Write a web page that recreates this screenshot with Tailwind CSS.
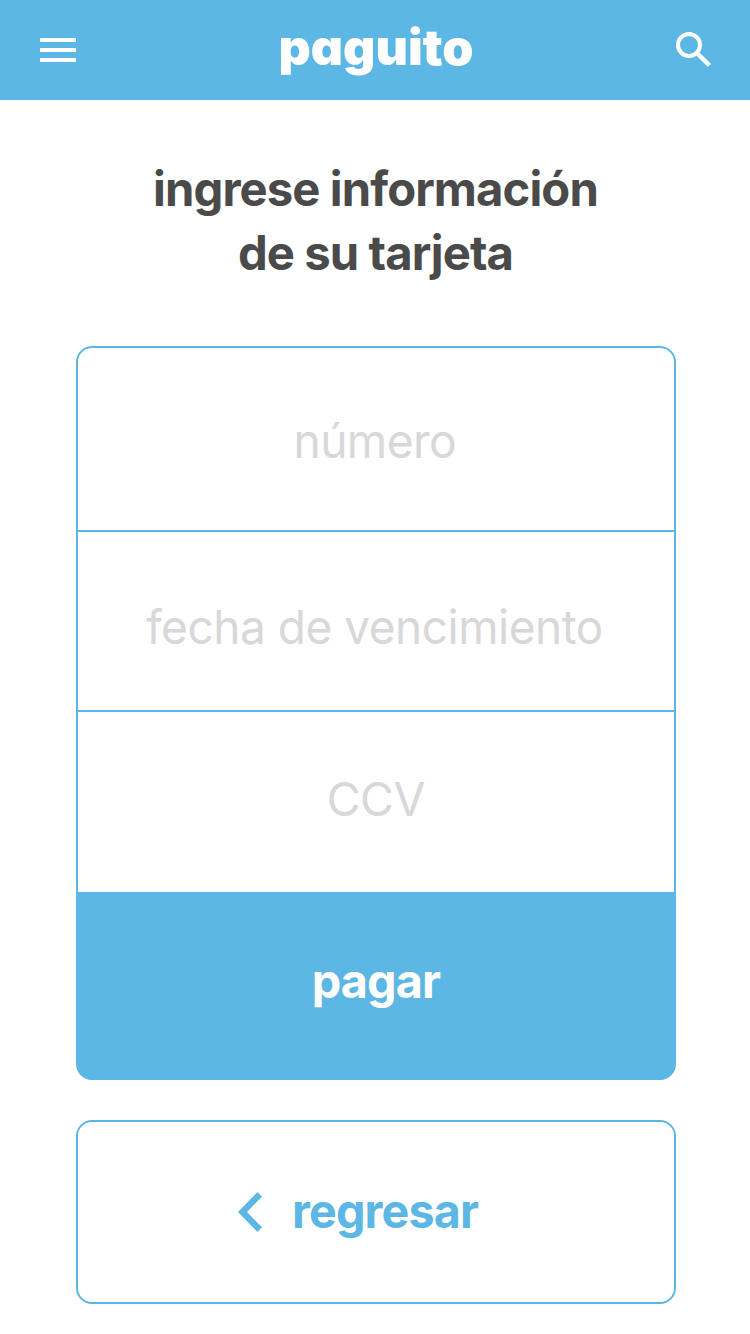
<!DOCTYPE html>
<html lang="es"><head><meta charset="utf-8"><title>paguito</title>
<script src="https://cdn.jsdelivr.net/npm/@tailwindcss/browser@4"></script></head>
<body class="bg-white font-['Inter',sans-serif] text-[48px] leading-[64px] whitespace-nowrap">
<div class="w-[750px] h-[1334px] flex flex-col items-center overflow-hidden">
<header class="w-full h-[100px] shrink-0 bg-[#5db7e4] flex items-center justify-between pl-10 pr-[38px] text-white">
<svg class="w-9 h-6" viewBox="0 0 36 24" fill="currentColor"><path d="M0 0h36v4H0zM0 10h36v4H0zM0 20h36v4H0z"/></svg>
<svg class="w-[200px] h-[80px]" viewBox="275 10 200 80" fill="currentColor"><text x="277.500" y="65" textLength="195" lengthAdjust="spacingAndGlyphs" font-weight="900" font-size="49" class="[font-feature-settings:'cv11']">paguito</text></svg>
<svg class="w-9 h-9" viewBox="0 0 36 36" fill="none" stroke="currentColor"><circle cx="13" cy="13" r="11" stroke-width="4"/><path d="M22 22l11.500 11.500" stroke-width="4.500"/></svg>
</header>
<h1 class="mt-[57px] h-[189px] w-full pl-[1px] shrink-0 text-center font-bold text-[#4a4a4a] tracking-[-0.900px] scale-x-[.983]">ingrese información<br>de su tarjeta</h1>
<main class="ml-[2px] w-[600px] h-[734px] shrink-0 rounded-2xl border-2 border-[#5db7e4] bg-[linear-gradient(#fff_544px,#5db7e4_544px)] bg-origin-padding overflow-hidden text-[#d8d8d8] text-[47px] text-center">
<div class="h-[182px] pt-[61px] pr-[2px]"><span class="inline-block align-top tracking-[-0.600px] scale-x-[.982]">número</span></div>
<div class="h-[180px] pt-[63px] pr-[3px] border-t-2 border-[#5db7e4]"><span class="inline-block align-top tracking-[-0.500px] scale-x-[.979]">fecha de vencimiento</span></div>
<div class="h-[182px] pt-[55px] pr-[1px] border-t-2 border-[#5db7e4]"><span class="inline-block align-top tracking-[-0.500px] scale-x-[.985]">CCV</span></div>
<button class="block w-full h-[188px] pb-[10px] pr-[1px] bg-[#5db7e4] font-bold text-[48px] text-white"><span class="inline-block align-top tracking-[-0.900px] scale-x-[.974]">pagar</span></button>
</main>
<button class="mt-10 ml-[2px] flex items-center pl-[160px] gap-[29.500px] w-[600px] h-[184px] shrink-0 rounded-2xl border-2 border-[#5db7e4] text-[#5db7e4] font-bold"><svg class="w-6 h-10" viewBox="0 0 24 40" fill="currentColor"><path d="M19.500 0L24 4.700 9 20l15 15.300-4.500 4.700L0 20z"/></svg><span class="pb-[2px] origin-left tracking-[-0.900px] scale-x-[.972]">regresar</span></button>
</div></body></html>
